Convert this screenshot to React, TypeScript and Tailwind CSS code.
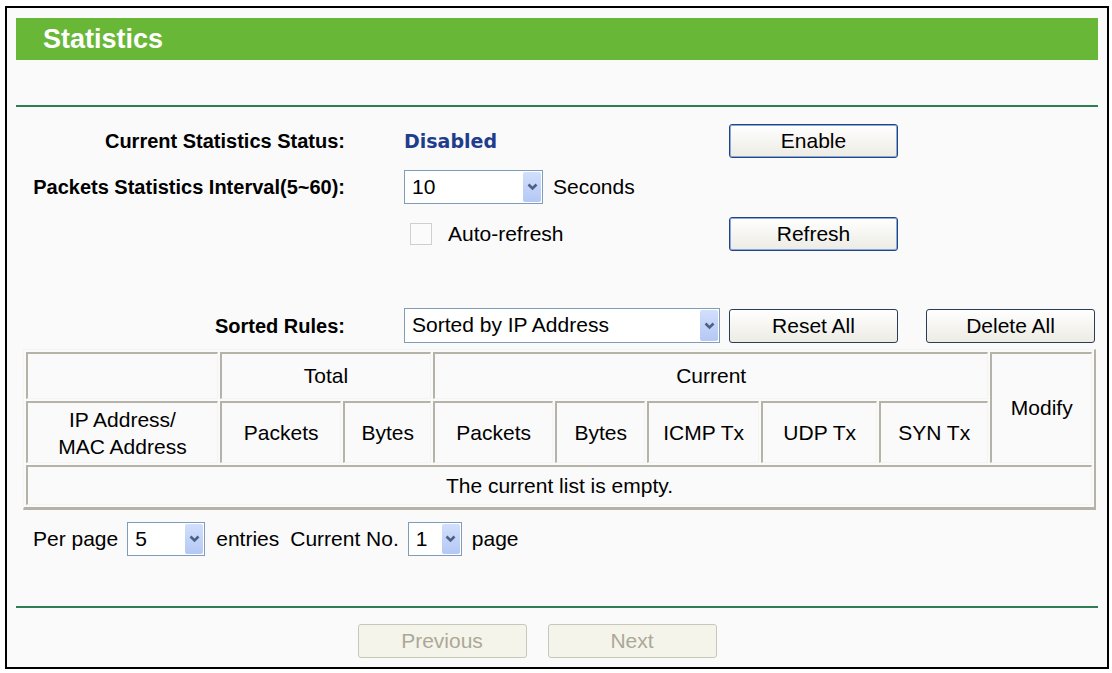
import { FC, ReactNode } from "react";

const font = { fontFamily: '"Liberation Sans", Arial, sans-serif' };

const Chevron: FC = () => (
	<svg width="11" height="8" viewBox="0 0 11 8">
		<path d="M1.5 1.5 L5.5 5.5 L9.5 1.5" fill="none" stroke="#4d6185" strokeWidth="2.6" />
	</svg>
);

interface SelectBoxProps {
	value: string;
	className: string;
}

const SelectBox: FC<SelectBoxProps> = ({ value, className }) => (
	<div className={`flex h-[34px] items-stretch border border-[#7f9db9] bg-white ${className}`}>
		<span className="flex-1 pl-[7px] leading-[32px]">{value}</span>
		<span className="m-[1px] flex w-[18px] items-center justify-center rounded-[2px] bg-gradient-to-b from-[#d2dffc] to-[#b4c8f5]">
			<Chevron />
		</span>
	</div>
);

interface XpButtonProps {
	children: ReactNode;
	variant?: "default" | "plain" | "disabled";
	className?: string;
}

const XpButton: FC<XpButtonProps> = ({ children, variant = "plain", className = "" }) => {
	const look =
		variant === "default"
			? "border-[#24447c] text-black shadow-[inset_0_0_0_1px_#89a8e2] bg-gradient-to-b from-white to-[#ecebe4]"
			: variant === "disabled"
				? "border-[#c9c7ba] text-[#aca899] bg-[#f5f4ea]"
				: "border-[#2b3c55] text-black bg-gradient-to-b from-white to-[#ecebe4]";
	return (
		<div className={`flex h-[34px] w-[169px] items-center justify-center rounded-[3px] border text-[21px] ${look} ${className}`}>
			{children}
		</div>
	);
};

const Th: FC<{ children?: ReactNode; className?: string; rowSpan?: number; colSpan?: number }> = ({
	children,
	className = "",
	rowSpan,
	colSpan
}) => (
	<td
		rowSpan={rowSpan}
		colSpan={colSpan}
		className={`border-t-2 border-l-2 border-r border-b border-t-[#b5b3a8] border-l-[#b5b3a8] border-r-[#f4f4f0] border-b-[#f4f4f0] p-0 text-center align-middle font-normal ${className}`}
	>
		{children}
	</td>
);

const App: FC = () => {
	return (
		<div className="min-h-screen bg-white pt-[6px] pl-[5px] text-black" style={font}>
			<div className="w-[1104px] h-[663px] border-2 border-black bg-[#fafafa] px-[9px] pt-[10px]">
				{/* header */}
				<div className="h-[42px] bg-[#68b736] pl-[27px] text-[27px] font-bold leading-[42px] text-white">
					Statistics
				</div>
				<div className="mt-[45px] h-[2px] bg-[#2f7d55]" />

				{/* status rows */}
				<div className="mt-[17px] flex h-[34px] items-center text-[21px]">
					<div className="w-[329px] text-right text-[20px] font-bold">Current Statistics Status:</div>
					<div
						className="ml-[59px] w-[325px] text-[19px] font-bold text-[#1f3d8c]"
						style={{ fontFamily: '"DejaVu Sans", Verdana, sans-serif' }}
					>
						Disabled
					</div>
					<XpButton variant="default">Enable</XpButton>
				</div>

				<div className="mt-[12px] flex h-[34px] items-center text-[21px]">
					<div className="w-[329px] text-right text-[20px] font-bold">Packets Statistics Interval(5~60):</div>
					<div className="ml-[59px] flex w-[325px] items-center">
						<SelectBox value="10" className="w-[139px]" />
						<span className="ml-[10px]">Seconds</span>
					</div>
				</div>

				<div className="mt-[13px] flex h-[34px] items-center text-[21px]">
					<div className="w-[329px]" />
					<div className="ml-[59px] flex w-[325px] items-center">
						<span className="ml-[6px] h-[22px] w-[22px] border border-[#cfcfcf] bg-[#fbfbfb]" />
						<span className="ml-[16px]">Auto-refresh</span>
					</div>
					<XpButton variant="default">Refresh</XpButton>
				</div>

				<div className="mt-[57px] flex h-[35px] items-center text-[21px]">
					<div className="w-[329px] text-right text-[20px] font-bold">Sorted Rules:</div>
					<SelectBox value="Sorted by IP Address" className="ml-[59px] w-[316px] h-[35px]" />
					<XpButton className="ml-[9px]">Reset All</XpButton>
					<XpButton className="ml-[28px]">Delete All</XpButton>
				</div>

				{/* table */}
				<table className="mt-[6px] ml-[7px] w-[1073px] border-separate border-spacing-[2px] border-t border-l border-r-2 border-b-[3px] border-t-[#f4f4f0] border-l-[#f4f4f0] border-r-[#b5b3a8] border-b-[#b5b3a8] text-[21px]">
					<tbody>
						<tr className="h-[47px]">
							<Th className="w-[191px]" />
							<Th colSpan={2}>Total</Th>
							<Th colSpan={5}>Current</Th>
							<Th rowSpan={2} className="w-[101px]">
								Modify
							</Th>
						</tr>
						<tr className="h-[62px]">
							<Th className="leading-[27px]">
								IP Address/
								<br />
								MAC Address
							</Th>
							<Th className="w-[121px]">Packets</Th>
							<Th className="w-[87px]">Bytes</Th>
							<Th className="w-[120px]">Packets</Th>
							<Th className="w-[89px]">Bytes</Th>
							<Th className="w-[112px]">ICMP Tx</Th>
							<Th className="w-[115px]">UDP Tx</Th>
							<Th className="w-[109px]">SYN Tx</Th>
						</tr>
						<tr className="h-[40px]">
							<Th colSpan={9}>The current list is empty.</Th>
						</tr>
					</tbody>
				</table>

				{/* paging */}
				<div className="mt-[12px] flex h-[34px] items-center pl-[17px] text-[21px]">
					<span>Per page</span>
					<SelectBox value="5" className="ml-[9px] w-[78px]" />
					<span className="ml-[11px]">entries</span>
					<span className="ml-[11px]">Current No.</span>
					<SelectBox value="1" className="ml-[9px] w-[54px]" />
					<span className="ml-[10px]">page</span>
				</div>

				<div className="mt-[50px] h-[2px] bg-[#2f7d55]" />

				<div className="mt-[16px] flex justify-center gap-[21px] pr-[40px]">
					<XpButton variant="disabled">Previous</XpButton>
					<XpButton variant="disabled">Next</XpButton>
				</div>
			</div>
		</div>
	);
};

export default App;
